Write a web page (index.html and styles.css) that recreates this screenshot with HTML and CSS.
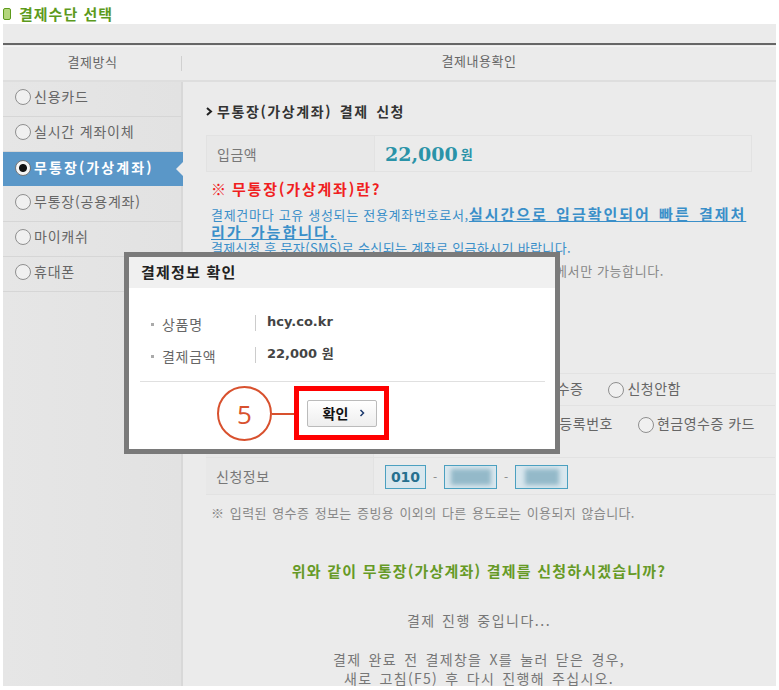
FILE: index.html
```html
<!DOCTYPE html>
<html lang="ko">
<head>
<meta charset="utf-8">
<title>결제수단 선택</title>
<link rel="stylesheet" href="styles.css">
</head>
<body>
<div class="page">
  <h1 class="page-title"><span class="title-icon"></span>결제수단 선택</h1>
  <div class="panel">
    <div class="top-band"></div>
    <div class="head">
      <div class="head-left"><span>결제방식</span></div>
      <div class="head-right">결제내용확인</div>
    </div>
    <div class="body">
      <ul class="side">
        <li class="side-item"><span class="radio"></span>신용카드</li>
        <li class="side-item"><span class="radio"></span>실시간 계좌이체</li>
        <li class="side-item active"><span class="radio on"></span>무통장(가상계좌)</li>
        <li class="side-item"><span class="radio"></span>무통장(공용계좌)</li>
        <li class="side-item"><span class="radio"></span>마이캐쉬</li>
        <li class="side-item"><span class="radio"></span>휴대폰</li>
      </ul>
      <div class="main">
        <h2 class="main-title"><svg class="chev" width="7" height="9" viewBox="0 0 7 9"><path d="M1 1l4 3.500-4 3.500" fill="none" stroke="#222" stroke-width="2"/></svg>무통장(가상계좌) 결제 신청</h2>
        <div class="row amount-row">
          <div class="cell-label">입금액</div>
          <div class="cell-value"><b class="amount">22,000</b><b class="won">원</b></div>
        </div>
        <p class="red-title"><span class="ref">※</span> 무통장(가상계좌)란?</p>
        <p class="blue blue-lead">결제건마다 고유 생성되는 전용계좌번호로서,<a class="blue-strong">실시간으로 입금확인되어 빠른 결제처리가 가능합니다.</a></p>
        <p class="blue blue-tail">결제신청 후 문자(SMS)로 수신되는 계좌로 입금하시기 바랍니다.</p>
        <p class="grey-note">무통장 입금은 결제신청 후 지정된 기한 내 은행 창구에서만 가능합니다.</p>
        <div class="receipt">
          <div class="row r-one">
            <div class="cell-label">현금영수증</div>
            <div class="cell-opts"><span class="opt"><span class="radio"></span>소득공제용 현금영수증</span><span class="opt"><span class="radio"></span>신청안함</span></div>
          </div>
          <div class="row r-two">
            <div class="cell-label">신청방법</div>
            <div class="cell-opts two"><span class="opt"><span class="radio"></span>휴대폰번호</span><span class="opt"><span class="radio"></span>사업자등록번호</span><span class="opt"><span class="radio"></span>현금영수증 카드</span></div>
          </div>
          <div class="row r-three">
            <div class="cell-label">신청정보</div>
            <div class="cell-phone"><span class="inp first">010</span><i class="dash">-</i><span class="inp"><span class="smear one"></span></span><i class="dash">-</i><span class="inp"><span class="smear two"></span></span></div>
          </div>
        </div>
        <p class="small-note">※ 입력된 영수증 정보는 증빙용 이외의 다른 용도로는 이용되지 않습니다.</p>
        <p class="confirm">위와 같이 무통장(가상계좌) 결제를 신청하시겠습니까?</p>
        <p class="progress">결제 진행 중입니다...</p>
        <p class="closing">결제 완료 전 결제창을 X를 눌러 닫은 경우,<br>새로 고침(F5) 후 다시 진행해 주십시오.</p>
      </div>
    </div>
  </div>
  <div class="modal">
    <div class="modal-head">결제정보 확인</div>
    <dl class="modal-list">
      <div class="modal-row"><dt>상품명</dt><dd>hcy.co.kr</dd></div>
      <div class="modal-row"><dt>결제금액</dt><dd>22,000 원</dd></div>
    </dl>
    <div class="modal-foot">
      <span class="step">5</span>
      <span class="step-line"></span>
      <span class="highlight"><button class="ok" type="button">확인<svg width="6" height="8" viewBox="0 0 6 8"><path d="M1.500 1l3 3-3 3" fill="none" stroke="#1d3a6e" stroke-width="1.500"/></svg></button></span>
    </div>
  </div>
</div>
</body>
</html>
```
FILE: styles.css
```css
* { box-sizing: border-box; }
html, body { margin: 0; padding: 0; background: #fff; }
body { font-family: "Noto Sans CJK KR", "Noto Sans", sans-serif; width: 779px; height: 690px; overflow: hidden; }
ul, dl, dd, p, h1, h2 { margin: 0; padding: 0; }
.page { position: relative; height: 690px; padding: 0 3px; }

.page-title { height: 24px; padding: 4px 0 0 0; display: flex; align-items: center; font-size: 15px; line-height: 16px; font-weight: 700; color: #5d9a1c; letter-spacing: 1px; }
.title-icon { width: 8px; height: 12px; margin-right: 8px; border-radius: 2px; background: #b4d67c; border: 1px solid #5d9a1c; }

.panel { height: 662px; background: #ebebeb; overflow: hidden; }
.top-band { height: 21px; border-bottom: 2px solid #666; }
.head { height: 36px; margin-top: 1px; display: flex; border-top: 1px solid #f4f4f4; border-bottom: 2px solid #dedede; font-size: 13px; color: #666; letter-spacing: 0.5px; }
.head-left { width: 179px; display: flex; align-items: center; justify-content: center; position: relative; padding-bottom: 5px; }
.head-left::after { content: ""; position: absolute; right: 0; top: 9px; height: 15px; width: 1px; background: #d0d0d0; }
.head-right { flex: 1; text-align: center; line-height: 28px; }

.body { display: flex; height: 604px; }
.side { width: 180px; list-style: none; background: linear-gradient(90deg, #e6e6e6, #e2e2e2); border-right: 2px solid #d8d8d8; flex: none; }
.side-item { height: 35px; padding: 0 0 7px 12px; display: flex; align-items: center; font-size: 14px; letter-spacing: 0.8px; color: #666; border-bottom: 1px solid #d6d6d6; }
.side-item.active { height: 34px; margin-bottom: 1px; padding-bottom: 5px; background: #5a97c8; color: #fff; font-weight: 700; letter-spacing: 2.100px; border-bottom: 0; position: relative; width: 180px; }
.side-item.active::after { content: ""; position: absolute; right: 0; top: 10px; border: 7px solid transparent; border-right-color: #ebebeb; border-left-width: 0; }
.radio { display: inline-block; flex: none; width: 16px; height: 16px; margin: 3px 3px 0 0; border: 1.500px solid #8f8f8f; border-radius: 50%; background: #f0f0f0; }
.radio.on { background: radial-gradient(circle, #111 0 3.500px, #f4f4f4 4.500px); border-color: #777; }

.main { flex: 1; padding: 20px 0 0 23px; min-width: 0; }
.main-title { font-size: 14px; line-height: 18px; font-weight: 700; color: #333; display: flex; align-items: center; letter-spacing: 1.600px; word-spacing: 2px; }
.chev { margin-right: 4px; }
.row { display: flex; border: 1px solid #e2e2e2; }
.amount-row { margin-top: 15px; height: 37px; width: 546px; align-items: stretch; }
.cell-label { width: 168px; flex: none; padding-left: 10px; display: flex; align-items: center; font-size: 14px; letter-spacing: 0.5px; color: #777; background: #e8e8e8; border-right: 1px solid #e2e2e2; }
.cell-value { flex: 1; padding-left: 10px; display: flex; align-items: center; }
.amount { font-family: "DejaVu Serif", serif; font-size: 19px; color: #2a93a8; }
.won { font-size: 13px; color: #2a93a8; margin-left: 3px; }
.red-title { margin: 8px 0 0 5px; height: 18px; font-size: 15px; line-height: 18px; font-weight: 700; color: #f01f1f; letter-spacing: 1.800px; }
.ref { font-weight: 400; letter-spacing: 0; }
.blue { margin: 0 0 0 5px; font-size: 13px; line-height: 17px; color: #3a8fc9; width: 541px; letter-spacing: 0.700px; }
.blue-lead { margin-top: 7px; height: 34px; }
.blue-strong { font-size: 15px; line-height: 17px; font-weight: 700; text-decoration: underline; letter-spacing: 2px; word-spacing: 2px; }
.blue-tail { height: 17px; letter-spacing: 0.350px; }
.grey-note { margin: 6px 0 0 0; width: 458px; height: 17px; text-align: right; white-space: nowrap; font-size: 13px; line-height: 17px; color: #888; letter-spacing: 0.600px; }

.receipt { margin-top: 94px; width: 569px; }
.receipt .row { border-width: 1px 0 0; }
.r-one { height: 32px; }
.r-two { height: 52px; }
.r-three { height: 38px; border-width: 1px 0 !important; }
.cell-opts { flex: 1; display: flex; align-items: center; justify-content: flex-end; gap: 25px; font-size: 14px; letter-spacing: 0.500px; color: #666; padding: 0 94px 3px 0; white-space: nowrap; overflow: hidden; }
.cell-opts.two { padding: 7px 20px 0 0; align-items: flex-start; }
.opt { display: inline-flex; align-items: center; white-space: nowrap; }
.cell-phone { padding-left: 11px; display: flex; align-items: center; }
.inp { height: 24px; width: 53px; margin-top: 1px; border: 1px solid #4ba0c0; background: #d9e7ee; display: flex; align-items: center; justify-content: center; overflow: hidden; }
.inp.first { width: 41px; font-family: "DejaVu Sans", sans-serif; font-weight: 700; font-size: 14px; color: #26708f; }
.dash { font-style: normal; color: #888; font-size: 12px; width: 18px; text-align: center; }
.smear { display: block; height: 16px; background: #94b9c9; filter: blur(2px); }
.smear.one { width: 40px; }
.smear.two { width: 34px; }
.small-note { margin: 9px 0 0 5px; height: 17px; font-size: 13px; line-height: 17px; color: #888; letter-spacing: 0.350px; word-spacing: 1.500px; }
.confirm { margin-top: 41px; height: 18px; font-size: 15px; line-height: 18px; font-weight: 700; color: #669a26; text-align: center; width: 546px; letter-spacing: 1.200px; }
.progress { margin-top: 31px; height: 18px; font-size: 14px; line-height: 18px; color: #777; text-align: center; width: 546px; letter-spacing: 1.500px; word-spacing: 1px; }
.closing { margin-top: 21px; font-size: 14px; line-height: 19px; color: #777; text-align: center; width: 546px; letter-spacing: 1.300px; word-spacing: 2px; }

.modal { position: absolute; left: 124px; top: 252px; width: 436px; height: 202px; border: 5px solid #7a7a7a; background: #fff; }
.modal-head { height: 31px; padding-left: 12px; background: #f0f0f0; font-size: 15px; line-height: 29px; font-weight: 700; color: #222; letter-spacing: 1.200px; }
.modal-list { padding: 27px 11px 0 22px; height: 93px; }
.modal-row { display: flex; height: 32px; font-size: 14px; letter-spacing: 0.700px; color: #666; }
.modal-row dt { width: 104px; padding-left: 11px; position: relative; line-height: 18px; }
.modal-row dt::before { content: ""; position: absolute; left: 0; top: 8px; width: 3px; height: 3px; background: #aaa; }
.modal-row dd { border-left: 1px solid #ccc; padding-left: 11px; height: 16px; line-height: 13px; font-family: "DejaVu Sans", "Noto Sans CJK KR", sans-serif; font-weight: 700; font-size: 13px; letter-spacing: 0; color: #444; }
.modal-foot { margin: 0 10px 0 11px; height: 68px; border-top: 1px solid #e0e0e0; display: flex; align-items: flex-start; padding: 4px 0 0 77px; }
.step { width: 55px; height: 55px; flex: none; border: 2px solid #d8512e; border-radius: 50%; display: flex; align-items: center; justify-content: center; font-family: "Open Sans", sans-serif; font-size: 26px; color: #d8512e; }
.step-line { width: 22px; height: 2px; margin-top: 27px; background: #d8512e; flex: none; }
.highlight { width: 95px; height: 54px; flex: none; border: 5px solid #f00; display: flex; align-items: center; justify-content: center; }
.ok { width: 70px; height: 27px; padding: 0 0 0 5px; border: 1px solid #bbb; border-radius: 2px; background: linear-gradient(#fff, #eee); font-family: "Noto Sans CJK KR", sans-serif; font-size: 14px; font-weight: 700; color: #111; display: flex; align-items: center; justify-content: center; gap: 11px; }
```
